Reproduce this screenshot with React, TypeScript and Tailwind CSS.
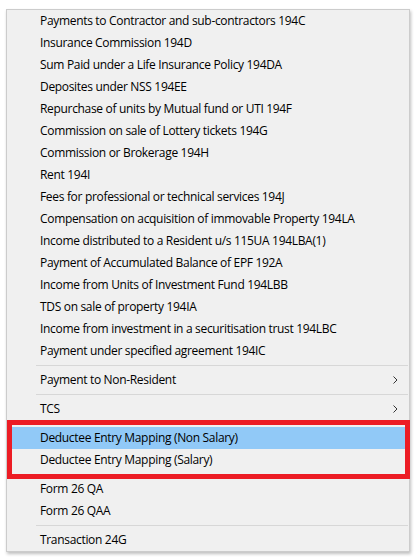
import React from "react";

type Entry =
  | { kind: "item"; label: string; sub?: boolean; active?: boolean }
  | { kind: "sep" };

const entries: Entry[] = [
  { kind: "item", label: "Payments to Contractor and sub-contractors 194C" },
  { kind: "item", label: "Insurance Commission 194D" },
  { kind: "item", label: "Sum Paid under a Life Insurance Policy 194DA" },
  { kind: "item", label: "Deposites under NSS 194EE" },
  { kind: "item", label: "Repurchase of units by Mutual fund or UTI 194F" },
  { kind: "item", label: "Commission on sale of Lottery tickets 194G" },
  { kind: "item", label: "Commission or Brokerage 194H" },
  { kind: "item", label: "Rent 194I" },
  { kind: "item", label: "Fees for professional or technical services 194J" },
  { kind: "item", label: "Compensation on acquisition of immovable Property 194LA" },
  { kind: "item", label: "Income distributed to a Resident u/s 115UA 194LBA(1)" },
  { kind: "item", label: "Payment of Accumulated Balance of EPF 192A" },
  { kind: "item", label: "Income from Units of Investment Fund 194LBB" },
  { kind: "item", label: "TDS on sale of property 194IA" },
  { kind: "item", label: "Income from investment in a securitisation trust 194LBC" },
  { kind: "item", label: "Payment under specified agreement 194IC" },
  { kind: "sep" },
  { kind: "item", label: "Payment to Non-Resident", sub: true },
  { kind: "sep" },
  { kind: "item", label: "TCS", sub: true },
  { kind: "sep" },
  { kind: "item", label: "Deductee Entry Mapping (Non Salary)", active: true },
  { kind: "item", label: "Deductee Entry Mapping (Salary)" },
  { kind: "sep" },
  { kind: "item", label: "Form 26 QA" },
  { kind: "item", label: "Form 26 QAA" },
  { kind: "sep" },
  { kind: "item", label: "Transaction 24G" },
];

function Chevron() {
  return (
    <svg width="5" height="8" viewBox="0 0 5 8" className="text-[#333]">
      <path d="M0.5 0.5 L4 4 L0.5 7.5" fill="none" stroke="currentColor" strokeWidth="1" />
    </svg>
  );
}

export default function App() {
  return (
    <div className="relative w-[417px] h-[560px] bg-white font-['Open_Sans',sans-serif] text-[12px] tracking-[-0.32px] text-black">
      <div className="absolute left-0 top-0 w-full h-full pt-[9px] pl-[6px]">
        <div className="w-[404px] bg-[#f0f0f0] border border-[#cccccc] shadow-[1px_2px_3px_rgba(0,0,0,0.25)]">
          {entries.map((e, i) =>
            e.kind === "sep" ? (
              <div key={i} className="py-[3px] pl-[29px] pr-[1px]">
                <div className="h-px bg-[#d7d7d7]" />
              </div>
            ) : (
              <div
                key={i}
                className={
                  "flex items-center h-[22px] pl-[33px] pr-[11px] " +
                  (e.active ? "bg-[#91c9f7]" : "")
                }
              >
                <span className="flex-1 leading-none pb-[1px]">{e.label}</span>
                {e.sub && <Chevron />}
              </div>
            )
          )}
        </div>
      </div>
      <div className="absolute left-[7px] top-[420px] w-[403px] h-[59px] border-[5px] border-[#ec1c24]" />
    </div>
  );
}
